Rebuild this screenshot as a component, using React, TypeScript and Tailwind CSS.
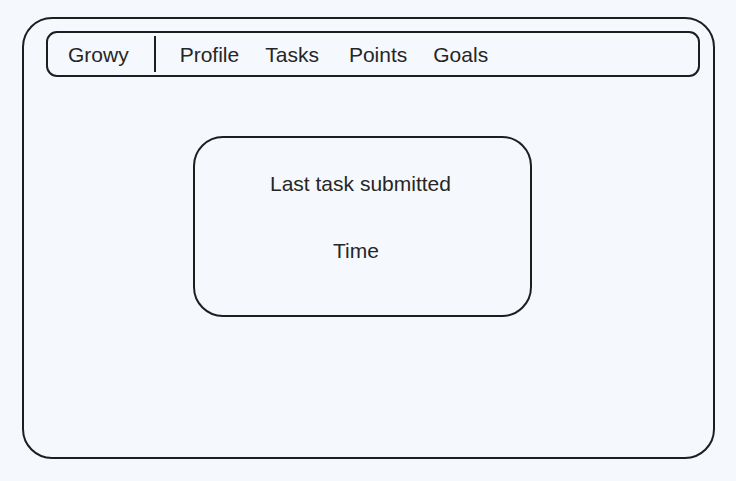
export default function App() {
  return (
    <div
      className="w-[736px] h-[481px] bg-[#f5f9fd] pt-[17px] pl-[22px] text-[#262626]"
      style={{ fontFamily: '"Liberation Sans", Arial, sans-serif' }}
    >
      <div className="w-[693px] h-[442px] border-2 border-[#1e1e1e] rounded-[30px] flex flex-col">
        {/* nav */}
        <div className="ml-[22px] mt-[12px] w-[654px] h-[46px] border-2 border-[#1e1e1e] rounded-[11px] flex items-center pl-[20px] text-[21px] leading-none">
          <span>Growy</span>
          <span className="ml-[25px] w-[2px] h-[36px] bg-[#1e1e1e]" />
          <span className="ml-[24px]">Profile</span>
          <span className="ml-[26px]">Tasks</span>
          <span className="ml-[30px]">Points</span>
          <span className="ml-[26px]">Goals</span>
        </div>

        {/* last task card */}
        <div className="ml-[169px] mt-[59px] w-[339px] h-[181px] border-2 border-[#1e1e1e] rounded-[30px] flex flex-col items-start pt-[35px] text-[21px] leading-none">
          <span className="ml-[75px]">Last task submitted</span>
          <span className="ml-[138px] mt-[46px]">Time</span>
        </div>
      </div>
    </div>
  );
}
